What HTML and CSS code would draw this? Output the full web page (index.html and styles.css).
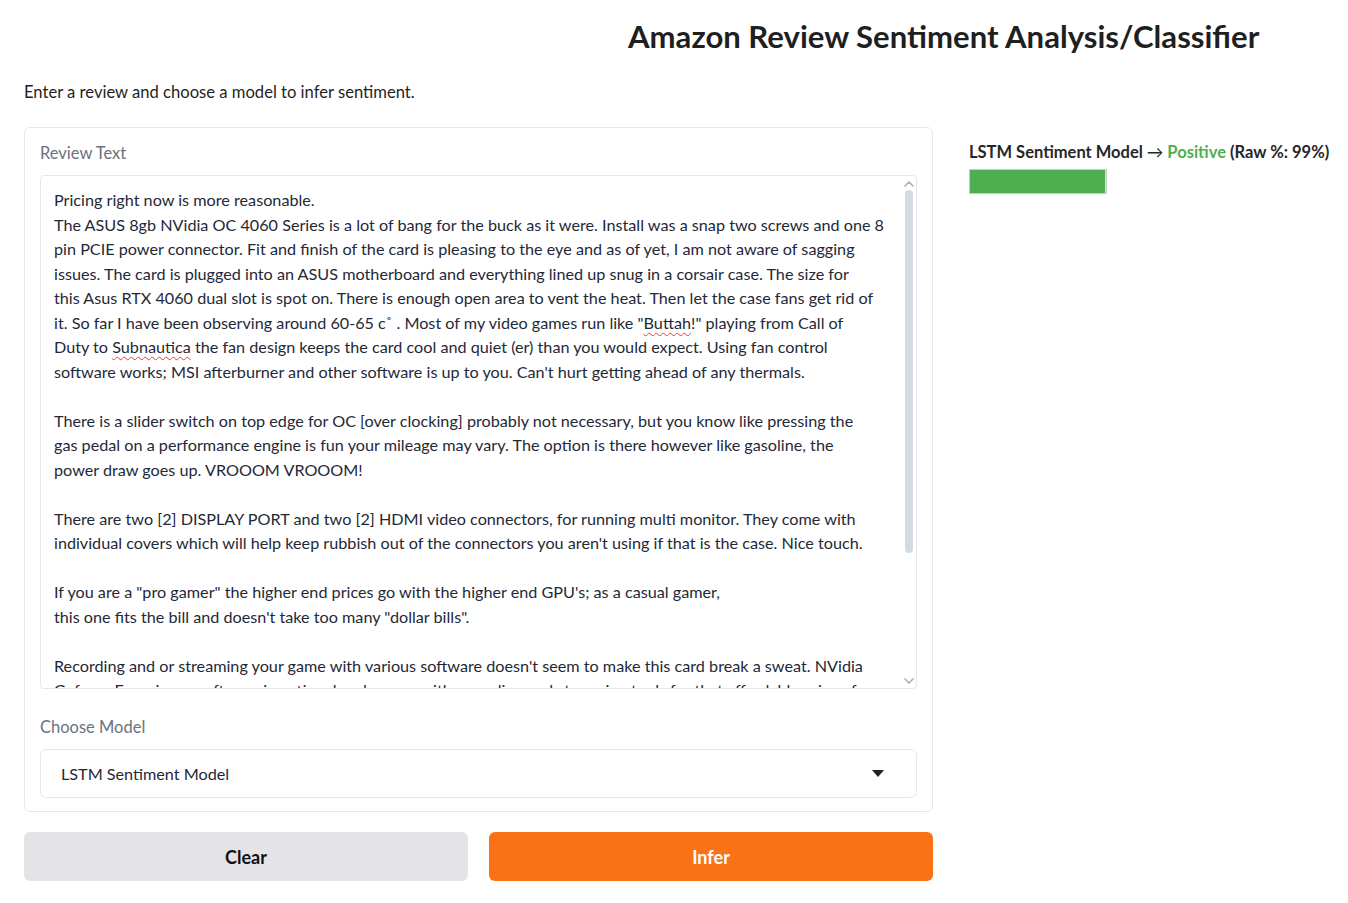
FILE: index.html
```html
<!DOCTYPE html>
<html lang="en">
<head>
<meta charset="utf-8">
<title>Amazon Review Sentiment Analysis/Classifier</title>
<link rel="stylesheet" href="styles.css">
</head>
<body>
<div class="app">
  <h1 class="title">Amazon Review Sentiment Analysis/Classifier</h1>
  <p class="subtitle">Enter a review and choose a model to infer sentiment.</p>
  <div class="main">
    <div class="left">
      <div class="panel">
        <label class="label">Review Text</label>
        <div class="textbox-wrap">
          <div class="textbox" role="textbox" aria-multiline="true">
            <div class="line">Pricing right now is more reasonable.</div>
            <div class="line">The ASUS 8gb NVidia OC 4060 Series is a lot of bang for the buck as it were. Install was a snap two screws and one 8</div>
            <div class="line">pin PCIE power connector. Fit and finish of the card is pleasing to the eye and as of yet, I am not aware of sagging</div>
            <div class="line">issues. The card is plugged into an ASUS motherboard and everything lined up snug in a corsair case. The size for</div>
            <div class="line">this Asus RTX 4060 dual slot is spot on. There is enough open area to vent the heat. Then let the case fans get rid of</div>
            <div class="line">it. So far I have been observing around 60-65 c˚ . Most of my video games run like "<span class="spell">Buttah</span>!" playing from Call of</div>
            <div class="line">Duty to <span class="spell">Subnautica</span> the fan design keeps the card cool and quiet (er) than you would expect. Using fan control</div>
            <div class="line">software works; MSI afterburner and other software is up to you. Can't hurt getting ahead of any thermals.</div>
            <div class="line">&nbsp;</div>
            <div class="line">There is a slider switch on top edge for OC [over clocking] probably not necessary, but you know like pressing the</div>
            <div class="line">gas pedal on a performance engine is fun your mileage may vary. The option is there however like gasoline, the</div>
            <div class="line">power draw goes up. VROOOM VROOOM!</div>
            <div class="line">&nbsp;</div>
            <div class="line">There are two [2] DISPLAY PORT and two [2] HDMI video connectors, for running multi monitor. They come with</div>
            <div class="line">individual covers which will help keep rubbish out of the connectors you aren't using if that is the case. Nice touch.</div>
            <div class="line">&nbsp;</div>
            <div class="line">If you are a "pro gamer" the higher end prices go with the higher end GPU's; as a casual gamer,</div>
            <div class="line">this one fits the bill and doesn't take too many "dollar bills".</div>
            <div class="line">&nbsp;</div>
            <div class="line">Recording and or streaming your game with various software doesn't seem to make this card break a sweat. NVidia</div>
            <div class="line">Geforce Experience software is optional and comes with recording and streaming tools for that affordable price of</div>
            <div class="line">free. Driver updates come through the same app and install without any drama.</div>
            <div class="line">&nbsp;</div>
            <div class="line">Overall this is a solid card for 1080p and 1440p gaming, runs cool, stays quiet and does not draw a lot of power.</div>
            <div class="line">I would recommend it to anyone looking for a good mid range upgrade.</div>
            <div class="line">&nbsp;</div>
            <div class="line">Five stars.</div>
          </div>
          <div class="scrollbar" aria-hidden="true">
            <svg class="sb-arrow sb-up" width="10" height="6" viewBox="0 0 10 6"><path d="M1 5 L5 1 L9 5" fill="none" stroke="#aab3bd" stroke-width="1.7" stroke-linecap="round" stroke-linejoin="round"/></svg>
            <div class="sb-thumb"></div>
            <svg class="sb-arrow sb-down" width="10" height="6" viewBox="0 0 10 6"><path d="M1 1 L5 5 L9 1" fill="none" stroke="#aab3bd" stroke-width="1.7" stroke-linecap="round" stroke-linejoin="round"/></svg>
          </div>
        </div>
        <label class="label label-model">Choose Model</label>
        <div class="select">
          <span>LSTM Sentiment Model</span>
          <svg class="caret" width="12" height="8" viewBox="0 0 12 8"><path d="M0 0 H12 L6 7 Z" fill="#222"/></svg>
        </div>
      </div>
      <div class="buttons">
        <button class="btn btn-secondary">Clear</button>
        <button class="btn btn-primary">Infer</button>
      </div>
    </div>
    <div class="right">
      <div class="result">LSTM Sentiment Model <span class="arrow">→</span> <span class="positive">Positive</span> (Raw %: 99%)</div>
      <div class="bar"><div class="bar-fill" style="width:99%"></div></div>
    </div>
  </div>
</div>
</body>
</html>
```
FILE: styles.css
```css
* { box-sizing: border-box; }
html, body { margin: 0; padding: 0; background: #fff; }
body {
  font-family: Lato, "Noto Sans", sans-serif;
  color: #27272a;
  font-size: 16px;
}
.app { padding: 0 24px; }
.title {
  margin: 0;
  padding: 16px 0 0 604px;
  font-size: 31.1px;
  line-height: 40px;
  font-weight: 700;
  color: #1f1f1f;
  white-space: nowrap;
}
.subtitle {
  margin: 0;
  padding-top: 26px;
  line-height: 20px;
  font-size: 16.6px;
  color: #1f1f1f;
}
.main {
  display: flex;
  gap: 20px;
  margin-top: 25px;
}
.left { width: 909px; flex: none; }
.panel {
  border: 1px solid #e5e7eb;
  border-radius: 6px;
  padding: 15px 15px 13px;
  display: flex;
  flex-direction: column;
}
.label {
  display: block;
  color: #6b7280;
  font-size: 16.5px;
  line-height: 20px;
  margin: 0 0 12px;
}
.label-model { margin-top: 28px; margin-bottom: 12px; }
.textbox-wrap { position: relative; }
.textbox {
  height: 514px;
  border: 1px solid #e5e7eb;
  border-radius: 4px;
  padding: 12px 24px 12px 13px;
  overflow-y: scroll;
  scrollbar-width: none;
  font-size: 16.2px;
  line-height: 24.5px;
  color: #1f2937;
}
.textbox::-webkit-scrollbar { display: none; }
.line { white-space: nowrap; }
.spell {
  text-decoration: underline wavy #e53935;
  text-decoration-thickness: 1px;
  text-underline-offset: 3px;
}
.scrollbar {
  position: absolute;
  top: 1px;
  right: 1px;
  bottom: 1px;
  width: 15px;
}
.sb-arrow { position: absolute; left: 3px; display: block; }
.sb-up { top: 5px; }
.sb-down { bottom: 4px; }
.sb-thumb {
  position: absolute;
  top: 14px;
  left: 4px;
  width: 8px;
  height: 363px;
  border-radius: 4px;
  background: #d3dbe4;
}
.select {
  height: 49px;
  border: 1px solid #e5e7eb;
  border-radius: 6px;
  display: flex;
  align-items: center;
  justify-content: space-between;
  padding: 0 32px 0 20px;
  font-size: 16.2px;
  color: #1f2937;
}
.caret { display: block; }
.buttons {
  display: flex;
  gap: 21px;
  margin-top: 20px;
}
.btn {
  flex: 1;
  height: 49px;
  border: none;
  border-radius: 6px;
  font-family: Lato, "Noto Sans", sans-serif;
  font-size: 18px;
  font-weight: 700;
  cursor: pointer;
}
.btn-secondary { background: #e4e4e7; color: #111; }
.btn-primary { background: #f97316; color: #fff; }
.right { flex: 1; padding: 15px 0 0 16px; }
.result {
  font-size: 16.5px;
  font-weight: 700;
  line-height: 20px;
  color: #27272a;
  white-space: nowrap;
}
.arrow { font-weight: 400; }
.positive { color: #4caf50; }
.bar {
  margin-top: 7px;
  width: 138px;
  height: 25px;
  border: 1px solid #c8ccc8;
  background: #dcdcdc;
}
.bar-fill { height: 100%; background: #4caf50; }
```
